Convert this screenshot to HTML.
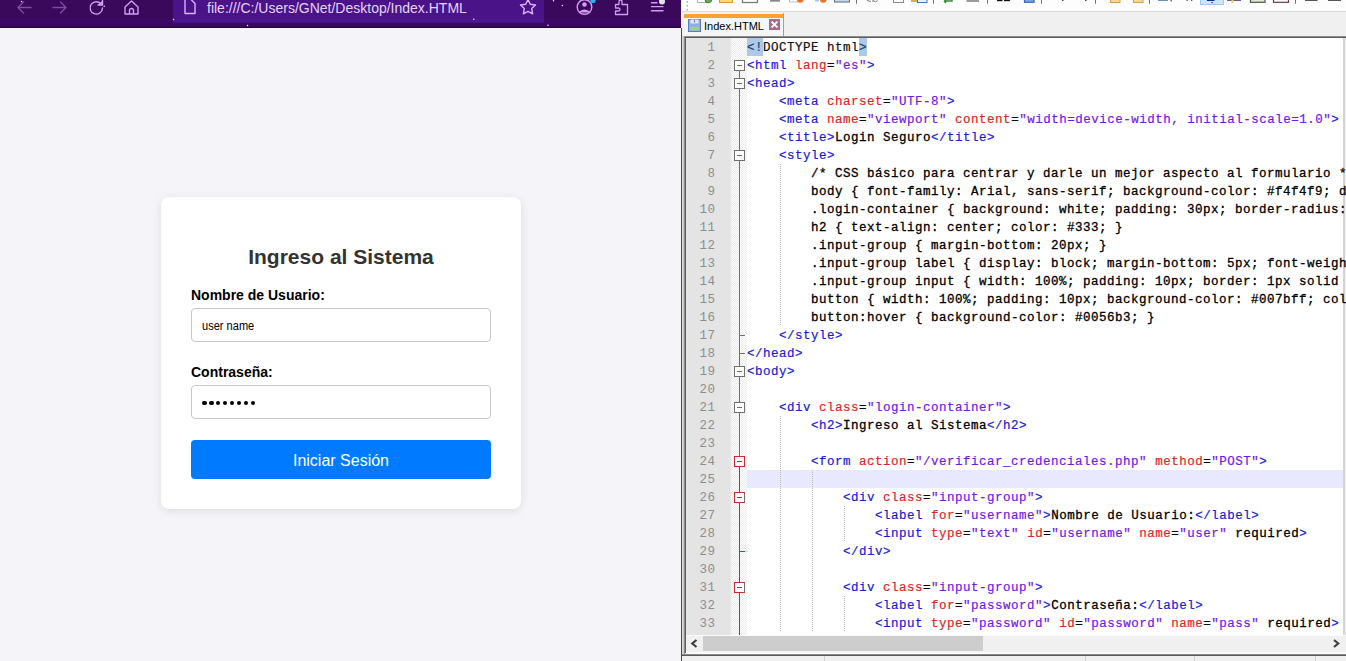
<!DOCTYPE html>
<html><head><meta charset="utf-8">
<style>
*{margin:0;padding:0;box-sizing:border-box}
html,body{width:1346px;height:661px;overflow:hidden;background:#f0f0f0;font-family:"Liberation Sans",sans-serif}
.abs{position:absolute}
/* ---------- browser ---------- */
#ff{position:absolute;left:0;top:0;width:681px;height:661px;background:#f4f4f9;overflow:hidden}
#tb{position:absolute;left:0;top:0;width:681px;height:28px;background:#3a095b}
#tb .band{position:absolute;left:0;top:19px;width:681px;height:8px;background:linear-gradient(to bottom,#3f0868,#3f0868 45%,#340a54)}
#tb .bot{position:absolute;left:0;top:27px;width:681px;height:1px;background:#22063e}
#url{position:absolute;left:173px;top:0;width:371px;height:23px;background:linear-gradient(to bottom,#4a1488 0,#4a1488 17px,#4f1690 20px,#48128a 23px)}
#urltxt{position:absolute;left:207px;top:-1px;font-size:14px;color:#e6d2ff;white-space:pre;line-height:18px}
.ico{position:absolute}
#card{position:absolute;left:161px;top:197px;width:360px;height:312px;background:#fff;border-radius:8px;box-shadow:0 2px 10px rgba(0,0,0,0.1)}
#h2{position:absolute;left:0;width:360px;top:242px;text-align:center;font-weight:bold;font-size:21px;color:#333;line-height:30px}
.lab{position:absolute;left:191px;font-weight:bold;font-size:14px;color:#000;line-height:18px;white-space:pre}
.inp{position:absolute;left:191px;width:300px;height:34px;border:1px solid #c8c8c8;border-radius:4px;background:#fff}
#btn{position:absolute;left:191px;top:440px;width:300px;height:39px;background:#007bff;border-radius:4px;color:#fff;font-size:16px;text-align:center;line-height:41px}
/* ---------- notepad++ ---------- */
#npp{position:absolute;left:682px;top:0;width:664px;height:661px;background:#f0f0f0}
#sep{position:absolute;left:681px;top:28px;width:1px;height:634px;background:#464c4c}
#ntool{position:absolute;left:682px;top:0;width:664px;height:12px;background:#fdfdfd;border-bottom:1px solid #dadada}
#tab{position:absolute;left:684px;top:13px;width:100px;height:24px;background:#f5f5f5;border-right:1px solid #a0a0a0}
#tab .or{position:absolute;left:0;top:1px;width:99px;height:4px;background:#f9a331}
#tabtxt{position:absolute;left:704px;top:17.5px;font-size:11px;color:#000;line-height:16px;white-space:pre}
#edframe{position:absolute;left:684px;top:36px;width:662px;height:618px;border-top:1px solid #8c8c8c;border-left:1px solid #8c8c8c;background:#f8f8f8}
#edframe2{position:absolute;left:685px;top:37px;width:661px;height:616px;border-top:1px solid #5c5c5c;border-left:1px solid #5c5c5c}
#lstrip{position:absolute;left:682px;top:36px;width:2px;height:625px;background:linear-gradient(to right,#d6dada 0,#d6dada 1px,#c8c8c8 1px)}
#botline{position:absolute;left:682px;top:654px;width:664px;height:2px;background:linear-gradient(to bottom,#8a8a8a 0,#8a8a8a 1px,#5a5a5a 1px)}
#gutter{position:absolute;left:686px;top:38px;width:46px;height:597px;background:linear-gradient(to right,#e4e4e4 0,#e4e4e4 44px,rgba(228,228,228,0.5) 45px,rgba(228,228,228,0) 46px)}
#fmargin{position:absolute;left:728px;top:38px;width:19px;height:597px;background:repeating-conic-gradient(#ebebeb 0 25%,#fefefe 0 50%) 0 0/2px 2px}
#text{position:absolute;left:747px;top:38px;width:596px;height:597px;background:#fff}
#rb{position:absolute;left:1343px;top:38px;width:3px;height:597px;background:linear-gradient(to right,#d4d4d4 0,#d4d4d4 2px,#f0f0f0 2px)}
#curline{position:absolute;left:747px;top:470px;width:596px;height:18px;background:#e8e8ff}
.ln{position:absolute;left:747px;height:18px;line-height:20px;font-family:"Liberation Mono",monospace;font-size:12.5px;letter-spacing:0.5px;-webkit-text-stroke-width:0.2px;white-space:pre;color:#000}
.num{position:absolute;left:686px;width:29.5px;text-align:right;height:18px;line-height:20px;font-family:"Liberation Mono",monospace;font-size:12.5px;letter-spacing:0.5px;color:#8e8e8e}
.b{color:#1a1ad4}.r{color:#d82828}.p{color:#7418e4}.k{color:#000;-webkit-text-stroke-width:0.3px}
.hl{color:#2a3a6a}
.dt{color:#111}
.hlb{position:absolute;top:38px;height:18px;background:#abc9e8}
.fbox{position:absolute;left:734px;width:11px;height:11px;border:1px solid #808080;background:#fff}
.fbox div{position:absolute;left:2px;top:4px;width:5px;height:1px}
.ftick{position:absolute;left:739px;width:6px;height:1px}
.fv{position:absolute;left:739px;width:1px}
.ig{position:absolute;width:1px;background:repeating-linear-gradient(to bottom,#b8b8b8 0,#b8b8b8 1px,transparent 1px,transparent 2px)}
#hscroll{position:absolute;left:686px;top:635px;width:660px;height:17px;background:#f0f0f0;border-top:1px solid #fbfbfb}
#thumb{position:absolute;left:703px;top:636px;width:280px;height:15px;background:#cdcdcd}
#status{position:absolute;left:682px;top:656px;width:664px;height:5px;background:#f0f0f0}
#botwhite{position:absolute;left:686px;top:652px;width:660px;height:2px;background:#fafafa}
</style></head><body>
<div id="ff">
  <div id="tb"><div class="band"></div><div class="bot"></div></div>
  <div id="url"></div>
  <svg class="abs" style="left:0;top:0" width="681" height="27" viewBox="0 0 681 27">
 <g fill="none" stroke-linecap="round" stroke-linejoin="round">
  <path d="M31 7.5H18M23.5 2L18 7.5L23.5 13" stroke="#7c4ca6" stroke-width="1.4"/>
  <path d="M53 7.5H66M60.5 2L66 7.5L60.5 13" stroke="#7c4ca6" stroke-width="1.4"/>
  <path d="M101.5 4.5A6.2 6.2 0 1 0 102.5 8" stroke="#d29cf5" stroke-width="1.4"/>
  <path d="M102.5 0.5V5H98" stroke="#d29cf5" stroke-width="1.4" fill="#d29cf5"/>
  <path d="M125 7L131.5 1L138 7V14H125Z M129.5 14V10.5A1.7 1.7 0 0 1 133.5 10.5V14" stroke="#d29cf5" stroke-width="1.4"/>
  <path d="M185 0V13.5H195V3.5L191.5 0" stroke="#dcb0ff" stroke-width="1.4"/>
  <path d="M528 -0.5L530.3 4.3L535.5 5L531.7 8.6L532.6 13.8L528 11.3L523.4 13.8L524.3 8.6L520.5 5L525.7 4.3Z" stroke="#dcb0ff" stroke-width="1.4"/>
  <circle cx="584.5" cy="7" r="7.3" stroke="#d29cf5" stroke-width="1.4"/>
  <path d="M615.5 4.5H619V1.5A1.5 1.5 0 0 1 622 1.5V4.5H627.5V14.5H615.5V11H618.5A1.5 1.5 0 0 0 618.5 8H615.5Z" stroke="#d29cf5" stroke-width="1.3"/>
  <path d="M651.5 2.7H657M651.5 6.6H663M651.5 10.7H663" stroke="#d29cf5" stroke-width="1.4"/>
 </g>
 <circle cx="584.5" cy="4.5" r="2.3" fill="#d29cf5"/>
 <path d="M579.5 11.5Q584.5 7.5 589.5 11.5V12.5H579.5Z" fill="#d29cf5"/>
 <circle cx="593" cy="0.5" r="2.6" fill="#1fb6e8"/>
 <circle cx="662" cy="1.4" r="3" fill="#e8e0f0"/>
 <circle cx="21.5" cy="1.5" r="0.75" fill="#f4ecff"/><circle cx="104.2" cy="6.3" r="0.75" fill="#f4ecff"/><circle cx="173.5" cy="19.5" r="0.75" fill="#f4ecff"/><circle cx="247.5" cy="25.5" r="0.75" fill="#f4ecff"/><circle cx="473.8" cy="19.3" r="0.75" fill="#f4ecff"/><circle cx="548" cy="25.3" r="0.75" fill="#f4ecff"/><circle cx="553.5" cy="0.8" r="0.75" fill="#f4ecff"/><circle cx="562.4" cy="5.5" r="0.75" fill="#f4ecff"/>
</svg>
  <div id="urltxt">file:///C:/Users/GNet/Desktop/Index.HTML</div>
  <div id="card"></div>
  <div id="h2" style="left:161px">Ingreso al Sistema</div>
  <div class="lab" style="top:286px">Nombre de Usuario:</div>
  <div class="inp" style="top:308px"></div>
  <div class="abs" style="left:201.5px;top:318px;font-size:12.5px;line-height:16px;color:#000;transform:scaleX(0.885);transform-origin:0 0;white-space:pre">user name</div>
  <div class="lab" style="top:363px">Contraseña:</div>
  <div class="inp" style="top:385px"></div>
  <div class="abs" style="left:202.0px;top:400.7px;width:4.6px;height:4.6px;border-radius:50%;background:#000"></div><div class="abs" style="left:209.0px;top:400.7px;width:4.6px;height:4.6px;border-radius:50%;background:#000"></div><div class="abs" style="left:215.9px;top:400.7px;width:4.6px;height:4.6px;border-radius:50%;background:#000"></div><div class="abs" style="left:222.9px;top:400.7px;width:4.6px;height:4.6px;border-radius:50%;background:#000"></div><div class="abs" style="left:229.9px;top:400.7px;width:4.6px;height:4.6px;border-radius:50%;background:#000"></div><div class="abs" style="left:236.8px;top:400.7px;width:4.6px;height:4.6px;border-radius:50%;background:#000"></div><div class="abs" style="left:243.8px;top:400.7px;width:4.6px;height:4.6px;border-radius:50%;background:#000"></div><div class="abs" style="left:250.8px;top:400.7px;width:4.6px;height:4.6px;border-radius:50%;background:#000"></div>
  <div id="btn">Iniciar Sesión</div>
</div>
<div id="npp"></div>
<div id="sep"></div>
<div id="ntool"></div>
<svg class="abs" style="left:0;top:0" width="1346" height="12" viewBox="0 0 1346 12">
 <rect x="686.5" y="1" width="1.5" height="1.5" fill="#a8a8a8"/><rect x="686.5" y="5" width="1.5" height="1.5" fill="#a8a8a8"/><rect x="686.5" y="9" width="1.5" height="1.5" fill="#a8b4c8"/>
 <rect x="697.5" y="-2" width="9" height="4.5" fill="#fff" stroke="#b0b0b0"/>
 <circle cx="708.3" cy="-0.5" r="3.3" fill="#6ab04c" stroke="#2f7a2f"/>
 <rect x="719.5" y="-2" width="13" height="4.5" fill="#f5d87a" stroke="#cf9a3a"/>
 <rect x="742.5" y="-2" width="15" height="4.5" fill="#fff" stroke="#7a7a7a" stroke-width="1.3"/>
 <rect x="770" y="-1" width="10" height="2.7" fill="#8a8a8a"/>
 <rect x="789.5" y="-2" width="8" height="4" fill="#fff" stroke="#c0c0c0"/>
 <circle cx="800.3" cy="-0.5" r="3.3" fill="#e8742a"/>
 <rect x="815" y="-1" width="4" height="2.5" fill="#a8c4e8"/>
 <circle cx="823.3" cy="-0.5" r="3.3" fill="#e8742a"/>
 <rect x="834.5" y="-2" width="15" height="4" fill="#c8d8ec" stroke="#5a6a80"/>
 <rect x="856" y="0" width="1" height="3.7" fill="#707070"/>
 <path d="M867 0.5L871 1.5M873 -1V2" stroke="#8a8a8a" stroke-width="1.2"/><circle cx="875.5" cy="0" r="1.8" fill="none" stroke="#8a8a8a"/>
 <rect x="893.5" y="-2" width="10" height="4.5" fill="#fff" stroke="#8a8a8a"/>
 <rect x="911" y="-1" width="7" height="3" fill="#e0a850"/>
 <rect x="917.5" y="-2" width="9.5" height="4.5" fill="#e8f0fc" stroke="#4a70c0"/>
 <rect x="933" y="0" width="1" height="3.7" fill="#707070"/>
 <path d="M944 1H952V-2M946 -0.5L944.5 1.5L946 3" stroke="#3a8a3a" stroke-width="1.5" fill="none"/>
 <rect x="966.5" y="-1" width="12.5" height="3" fill="#9a9a9a"/>
 <rect x="987" y="0" width="1" height="3.7" fill="#707070"/>
 <rect x="997" y="-1" width="5.5" height="2.2" fill="#111"/><rect x="1004" y="-1" width="6" height="2.2" fill="#111"/>
 <rect x="1024.5" y="-2" width="9.5" height="4.3" fill="#7aa4e8" stroke="#3a64c0" stroke-width="1.2"/>
 <rect x="1041" y="0" width="1" height="3.7" fill="#707070"/>
 <rect x="1062" y="-1" width="1.5" height="2" fill="#404040"/>
 <rect x="1085" y="-1" width="1.5" height="2" fill="#404040"/>
 <rect x="1095" y="0" width="1" height="3.7" fill="#707070"/>
 <rect x="1110.5" y="-2" width="9.5" height="4.5" fill="#f7d890" stroke="#d0a050"/>
 <rect x="1133.5" y="-2" width="9.5" height="4.5" fill="#f7d890" stroke="#d0a050"/>
 <rect x="1149" y="0" width="1" height="3.7" fill="#707070"/>
 <rect x="1158" y="-1" width="10" height="2" fill="#6a8ec8"/>
 <rect x="1170.5" y="-1" width="1.3" height="2.5" fill="#555"/>
 <rect x="1186.5" y="-1" width="1.3" height="2" fill="#555"/><rect x="1191" y="-1" width="1.3" height="2" fill="#555"/>
 <rect x="1200.5" y="-1" width="23" height="5.5" fill="#cce4f7" stroke="#a0c8ec"/>
 <rect x="1207" y="-1" width="7.5" height="2" fill="#1a2a8a"/><rect x="1211.5" y="2" width="1.2" height="1.2" fill="#1a2a8a"/>
 <rect x="1227" y="-1" width="14" height="2" fill="#6a5a9a"/><rect x="1231.5" y="0" width="2" height="3" fill="#e8d070"/>
 <rect x="1250.5" y="-2" width="14.5" height="4.3" fill="#e0e8d0" stroke="#4a5a4a" stroke-width="1.2"/>
 <rect x="1273.5" y="-2" width="15" height="4.3" fill="#fff" stroke="#6a3a4a" stroke-width="1.2"/>
 <rect x="1295" y="0" width="1" height="3.7" fill="#707070"/>
 <rect x="1305" y="-1" width="12.5" height="2" fill="#555"/>
 <rect x="1328" y="-1" width="13" height="2" fill="#555"/>
</svg>
<div id="tab"><div class="or"></div></div>
<div id="tabtxt">Index.HTML</div>
<svg class="abs" style="left:688px;top:19px" width="13" height="13" viewBox="0 0 13 13">
 <rect x="0.5" y="0.5" width="12" height="12" fill="#8fb0e0" stroke="#5a7cc0"/>
 <rect x="2.5" y="0.5" width="8" height="4" fill="#dfe8f8"/>
 <rect x="6" y="1" width="1" height="2.5" fill="#5a7cc0"/>
 <rect x="2" y="8" width="9" height="3.5" fill="#9ed28c"/>
</svg>
<svg class="abs" style="left:769px;top:19px" width="11" height="11" viewBox="0 0 11 11">
 <rect x="0" y="0" width="11" height="11" fill="#ad6885"/>
 <path d="M2.6 2.6L8.4 8.4M8.4 2.6L2.6 8.4" stroke="#fff" stroke-width="2"/>
</svg>
<div id="lstrip"></div>
<div id="edframe"></div>
<div id="edframe2"></div>
<div id="fmargin"></div>
<div id="gutter"></div>
<div id="text"></div>
<div id="rb"></div>
<div id="curline"></div>
<div class="hlb" style="left:747px;width:16px"></div><div class="hlb" style="left:859px;width:8px"></div>
<div class="ig" style="left:780px;top:164px;height:162px"></div>
<div class="ig" style="left:780px;top:416px;height:216px"></div>
<div class="ig" style="left:812px;top:470px;height:162px"></div>
<div class="ig" style="left:844px;top:506px;height:36px"></div>
<div class="ig" style="left:844px;top:596px;height:36px"></div>
<div class="num" style="top:38px">1</div>
<div class="num" style="top:56px">2</div>
<div class="num" style="top:74px">3</div>
<div class="num" style="top:92px">4</div>
<div class="num" style="top:110px">5</div>
<div class="num" style="top:128px">6</div>
<div class="num" style="top:146px">7</div>
<div class="num" style="top:164px">8</div>
<div class="num" style="top:182px">9</div>
<div class="num" style="top:200px">10</div>
<div class="num" style="top:218px">11</div>
<div class="num" style="top:236px">12</div>
<div class="num" style="top:254px">13</div>
<div class="num" style="top:272px">14</div>
<div class="num" style="top:290px">15</div>
<div class="num" style="top:308px">16</div>
<div class="num" style="top:326px">17</div>
<div class="num" style="top:344px">18</div>
<div class="num" style="top:362px">19</div>
<div class="num" style="top:380px">20</div>
<div class="num" style="top:398px">21</div>
<div class="num" style="top:416px">22</div>
<div class="num" style="top:434px">23</div>
<div class="num" style="top:452px">24</div>
<div class="num" style="top:470px">25</div>
<div class="num" style="top:488px">26</div>
<div class="num" style="top:506px">27</div>
<div class="num" style="top:524px">28</div>
<div class="num" style="top:542px">29</div>
<div class="num" style="top:560px">30</div>
<div class="num" style="top:578px">31</div>
<div class="num" style="top:596px">32</div>
<div class="num" style="top:614px">33</div>
<div class="fv" style="top:71px;height:385px;background:#707070"></div>
<div class="fv" style="top:467px;height:168px;background:#cc2a2a"></div>
<div class="fbox" style="top:60px;border-color:#707070"><div style="background:#707070"></div></div>
<div class="fbox" style="top:78px;border-color:#707070"><div style="background:#707070"></div></div>
<div class="fbox" style="top:150px;border-color:#707070"><div style="background:#707070"></div></div>
<div class="ftick" style="top:335px;background:#707070"></div>
<div class="ftick" style="top:353px;background:#707070"></div>
<div class="fbox" style="top:366px;border-color:#707070"><div style="background:#707070"></div></div>
<div class="fbox" style="top:402px;border-color:#707070"><div style="background:#707070"></div></div>
<div class="fbox" style="top:456px;border-color:#cc2a2a"><div style="background:#cc2a2a"></div></div>
<div class="fbox" style="top:492px;border-color:#cc2a2a #707070 #cc2a2a #cc2a2a"><div style="background:#555"></div></div>
<div class="ftick" style="top:551px;background:#cc2a2a"></div>
<div class="fbox" style="top:582px;border-color:#cc2a2a #707070 #cc2a2a #cc2a2a"><div style="background:#555"></div></div>
<div class="ln" style="top:38px"><span class="hl">&lt;!</span><span class="dt">DOCTYPE html</span><span class="hl">&gt;</span></div>
<div class="ln" style="top:56px"><span class="b">&lt;html</span> <span class="r">lang</span><span class="k">=</span><span class="p">&quot;es&quot;</span><span class="b">&gt;</span></div>
<div class="ln" style="top:74px"><span class="b">&lt;head</span><span class="b">&gt;</span></div>
<div class="ln" style="top:92px">    <span class="b">&lt;meta</span> <span class="r">charset</span><span class="k">=</span><span class="p">&quot;UTF-8&quot;</span><span class="b">&gt;</span></div>
<div class="ln" style="top:110px">    <span class="b">&lt;meta</span> <span class="r">name</span><span class="k">=</span><span class="p">&quot;viewport&quot;</span> <span class="r">content</span><span class="k">=</span><span class="p">&quot;width=device-width, initial-scale=1.0&quot;</span><span class="b">&gt;</span></div>
<div class="ln" style="top:128px">    <span class="b">&lt;title</span><span class="b">&gt;</span><span class="k">Login Seguro</span><span class="b">&lt;/title</span><span class="b">&gt;</span></div>
<div class="ln" style="top:146px">    <span class="b">&lt;style</span><span class="b">&gt;</span></div>
<div class="ln" style="top:164px"><span class="k">        /* CSS básico para centrar y darle un mejor aspecto al formulario */</span></div>
<div class="ln" style="top:182px"><span class="k">        body { font-family: Arial, sans-serif; background-color: #f4f4f9; display: flex; }</span></div>
<div class="ln" style="top:200px"><span class="k">        .login-container { background: white; padding: 30px; border-radius: 8px; }</span></div>
<div class="ln" style="top:218px"><span class="k">        h2 { text-align: center; color: #333; }</span></div>
<div class="ln" style="top:236px"><span class="k">        .input-group { margin-bottom: 20px; }</span></div>
<div class="ln" style="top:254px"><span class="k">        .input-group label { display: block; margin-bottom: 5px; font-weight: bold; }</span></div>
<div class="ln" style="top:272px"><span class="k">        .input-group input { width: 100%; padding: 10px; border: 1px solid #ccc; }</span></div>
<div class="ln" style="top:290px"><span class="k">        button { width: 100%; padding: 10px; background-color: #007bff; color: white; }</span></div>
<div class="ln" style="top:308px"><span class="k">        button:hover { background-color: #0056b3; }</span></div>
<div class="ln" style="top:326px">    <span class="b">&lt;/style</span><span class="b">&gt;</span></div>
<div class="ln" style="top:344px"><span class="b">&lt;/head</span><span class="b">&gt;</span></div>
<div class="ln" style="top:362px"><span class="b">&lt;body</span><span class="b">&gt;</span></div>
<div class="ln" style="top:380px"></div>
<div class="ln" style="top:398px">    <span class="b">&lt;div</span> <span class="r">class</span><span class="k">=</span><span class="p">&quot;login-container&quot;</span><span class="b">&gt;</span></div>
<div class="ln" style="top:416px">        <span class="b">&lt;h2</span><span class="b">&gt;</span><span class="k">Ingreso al Sistema</span><span class="b">&lt;/h2</span><span class="b">&gt;</span></div>
<div class="ln" style="top:434px"></div>
<div class="ln" style="top:452px">        <span class="b">&lt;form</span> <span class="r">action</span><span class="k">=</span><span class="p">&quot;/verificar_credenciales.php&quot;</span> <span class="r">method</span><span class="k">=</span><span class="p">&quot;POST&quot;</span><span class="b">&gt;</span></div>
<div class="ln" style="top:470px"></div>
<div class="ln" style="top:488px">            <span class="b">&lt;div</span> <span class="r">class</span><span class="k">=</span><span class="p">&quot;input-group&quot;</span><span class="b">&gt;</span></div>
<div class="ln" style="top:506px">                <span class="b">&lt;label</span> <span class="r">for</span><span class="k">=</span><span class="p">&quot;username&quot;</span><span class="b">&gt;</span><span class="k">Nombre de Usuario:</span><span class="b">&lt;/label</span><span class="b">&gt;</span></div>
<div class="ln" style="top:524px">                <span class="b">&lt;input</span> <span class="r">type</span><span class="k">=</span><span class="p">&quot;text&quot;</span> <span class="r">id</span><span class="k">=</span><span class="p">&quot;username&quot;</span> <span class="r">name</span><span class="k">=</span><span class="p">&quot;user&quot;</span> <span class="k">required</span><span class="b">&gt;</span></div>
<div class="ln" style="top:542px">            <span class="b">&lt;/div</span><span class="b">&gt;</span></div>
<div class="ln" style="top:560px"></div>
<div class="ln" style="top:578px">            <span class="b">&lt;div</span> <span class="r">class</span><span class="k">=</span><span class="p">&quot;input-group&quot;</span><span class="b">&gt;</span></div>
<div class="ln" style="top:596px">                <span class="b">&lt;label</span> <span class="r">for</span><span class="k">=</span><span class="p">&quot;password&quot;</span><span class="b">&gt;</span><span class="k">Contraseña:</span><span class="b">&lt;/label</span><span class="b">&gt;</span></div>
<div class="ln" style="top:614px">                <span class="b">&lt;input</span> <span class="r">type</span><span class="k">=</span><span class="p">&quot;password&quot;</span> <span class="r">id</span><span class="k">=</span><span class="p">&quot;password&quot;</span> <span class="r">name</span><span class="k">=</span><span class="p">&quot;pass&quot;</span> <span class="k">required</span><span class="b">&gt;</span></div>
<div id="hscroll"></div>
<div id="thumb"></div>
<div id="status"></div>
<div id="botwhite"></div>
<div id="botline"></div>
<svg class="abs" style="left:686px;top:635px" width="660" height="26" viewBox="686 635 660 26">
 <path d="M696.5 640L692.3 643.5L696.5 647" fill="none" stroke="#404040" stroke-width="2.2"/>
 <path d="M1334 640L1338.2 643.5L1334 647" fill="none" stroke="#404040" stroke-width="2.2"/>
 <rect x="824" y="656" width="1" height="5" fill="#d0d0d0"/>
 <rect x="1085" y="656" width="1" height="5" fill="#d0d0d0"/>
 <rect x="1194" y="656" width="1" height="5" fill="#d0d0d0"/>
 <rect x="1315" y="656" width="1" height="5" fill="#d0d0d0"/>
</svg>
</body></html>
